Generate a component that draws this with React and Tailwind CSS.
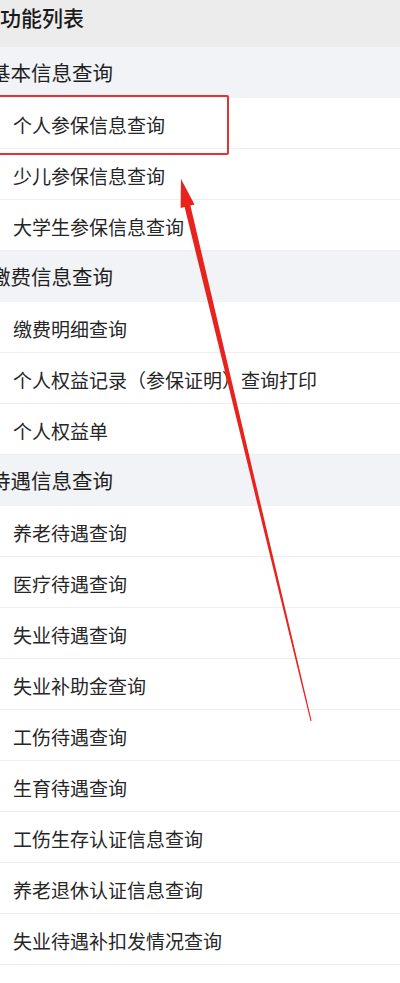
import React from 'react';

const sections = [
    {
        title: '基本信息查询',
        items: ['个人参保信息查询', '少儿参保信息查询', '大学生参保信息查询'],
    },
    {
        title: '缴费信息查询',
        items: ['缴费明细查询', '个人权益记录（参保证明）查询打印', '个人权益单'],
    },
    {
        title: '待遇信息查询',
        items: [
            '养老待遇查询',
            '医疗待遇查询',
            '失业待遇查询',
            '失业补助金查询',
            '工伤待遇查询',
            '生育待遇查询',
            '工伤生存认证信息查询',
            '养老退休认证信息查询',
            '失业待遇补扣发情况查询',
            '异地就医备案查询',
        ],
    },
];

const App = () => {
    return (
        <div
            className="relative w-[400px] h-[983px] overflow-hidden bg-white text-[#222222]"
            style={{ fontFamily: '"Noto Sans CJK SC", "Noto Sans", sans-serif' }}
        >
            {/* 标题栏 */}
            <div className="h-[47px] bg-[#ececec] pt-[5px]">
                <h1 className="text-[21px] leading-[24px] font-medium text-[#1a1a1a] ml-[0px]">功能列表</h1>
            </div>

            {/* 功能分组 */}
            {sections.map((sec) => (
                <div key={sec.title}>
                    <div className="h-[51px] bg-[#f1f3f6] flex items-center">
                        <h2 className="text-[20.5px] leading-none ml-[-10px] text-[#1f1f1f]">{sec.title}</h2>
                    </div>
                    {sec.items.map((item) => (
                        <div
                            key={item}
                            className="h-[51px] flex items-center pl-[13px] pt-[2px] border-b border-[#eeeeee] bg-white"
                        >
                            <span className="text-[19px] leading-none text-[#262626]">{item}</span>
                        </div>
                    ))}
                </div>
            ))}

            {/* 红框标注 */}
            <div className="absolute left-[-10px] top-[95px] w-[239px] h-[60px] border-[2.5px] border-[#e23232] rounded-[2px] pointer-events-none"></div>

            {/* 红色箭头 */}
            <svg className="absolute inset-0 pointer-events-none" width="400" height="983" viewBox="0 0 400 983">
                <polygon
                    points="181,179 194.5,204.5 190.4,205.5 311.6,720.8 310.6,721.2 184.6,206.9 180.6,208"
                    fill="#e8221c"
                />
            </svg>
        </div>
    );
};

export default App;
